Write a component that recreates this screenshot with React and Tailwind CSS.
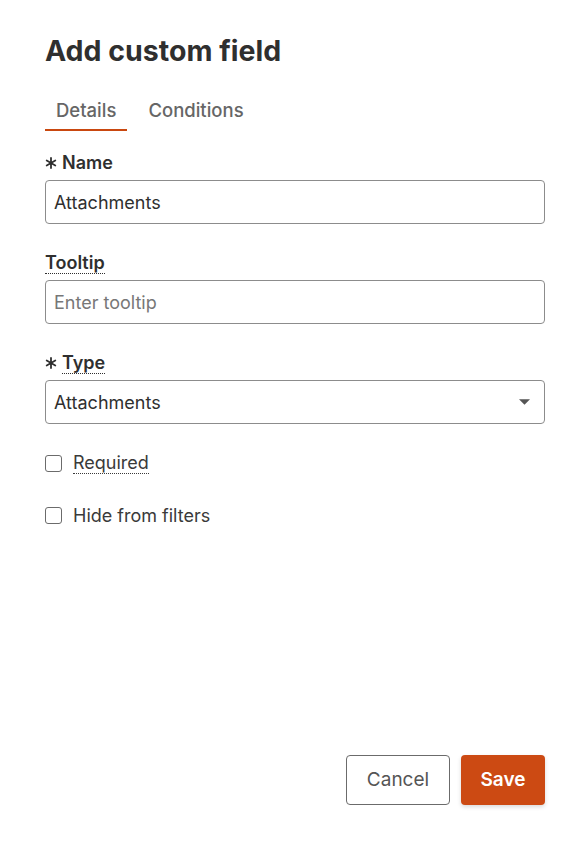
import { useState } from 'react';

const Asterisk = () => (
    <svg viewBox="0 0 12 12" className="w-3 h-3 mr-[5px]" fill="none" stroke="#2f2f2f" strokeWidth="1.8" strokeLinecap="round">
        <path d="M6 1v10M1.7 3.5l8.6 5M1.7 8.5l8.6-5" />
    </svg>
);

const Label = ({ required, dotted, children }) => (
    <div className="flex items-center h-5 mb-[7px] text-[18px] font-semibold text-[#2f2f2f]">
        {required && <Asterisk />}
        <span className={dotted ? 'border-b border-dotted border-[#2f2f2f] leading-[20px]' : 'leading-[20px]'}>{children}</span>
    </div>
);

const Checkbox = ({ label, dotted }) => (
    <label className="flex items-center gap-[11px] h-6 text-[18px] text-[#3a3a3a]">
        <span className="w-[17px] h-[17px] rounded-[3px] border-[1.5px] border-[#6b6b6b] bg-white" />
        <span className={dotted ? 'border-b border-dotted border-[#3a3a3a] leading-[21px]' : 'leading-[21px]'}>{label}</span>
    </label>
);

export default function App() {
    const [tab, setTab] = useState('details');

    return (
        <div className="min-h-[842px] bg-white flex flex-col pl-[45px] pr-[39px] pt-[33px] pb-[37px] font-['Inter',sans-serif] text-[#2f2f2f]">
            <h1 className="text-[28.5px] font-bold leading-[36px]">Add custom field</h1>

            <div className="flex mt-[29px] gap-[21px]">
                <button
                    onClick={() => setTab('details')}
                    className={`px-[11px] pb-[7px] text-[18.5px] font-medium leading-[24px] text-[#666] border-b-2 ${tab === 'details' ? 'border-[#c9480f]' : 'border-transparent'}`}
                >
                    Details
                </button>
                <button
                    onClick={() => setTab('conditions')}
                    className={`pb-[7px] text-[18.5px] font-medium leading-[24px] text-[#666] border-b-2 ${tab === 'conditions' ? 'border-[#c9480f]' : 'border-transparent'}`}
                >
                    Conditions
                </button>
            </div>

            <div className="mt-[22px]">
                <Label required>Name</Label>
                <input
                    defaultValue="Attachments"
                    className="w-full h-[44px] px-2 rounded-[4px] border border-[#8c8c8c] text-[18px] text-[#2f2f2f] outline-none"
                />
            </div>

            <div className="mt-[29px]">
                <Label dotted>Tooltip</Label>
                <input
                    placeholder="Enter tooltip"
                    className="w-full h-[44px] px-2 rounded-[4px] border border-[#8c8c8c] text-[18px] text-[#2f2f2f] placeholder:text-[#777] outline-none"
                />
            </div>

            <div className="mt-[29px]">
                <Label required dotted>Type</Label>
                <div className="w-full h-[44px] pl-2 pr-[14px] rounded-[4px] border border-[#8c8c8c] flex items-center justify-between text-[18px]">
                    <span>Attachments</span>
                    <svg viewBox="0 0 10 5" className="w-[11px] h-[6px]" fill="#555">
                        <path d="M0 0h10L5 5z" />
                    </svg>
                </div>
            </div>

            <div className="mt-[27px] flex flex-col gap-[28px]">
                <Checkbox label="Required" dotted />
                <Checkbox label="Hide from filters" />
            </div>

            <div className="mt-auto flex justify-end gap-[11px]">
                <button className="h-[50px] w-[104px] rounded-[4px] border border-[#6b6b6b] text-[19px] text-[#555] bg-white">
                    Cancel
                </button>
                <button className="h-[50px] w-[84px] rounded-[4px] bg-[#cc4a13] text-[19px] font-semibold text-white shadow-[0_2px_4px_rgba(0,0,0,0.15)]">
                    Save
                </button>
            </div>
        </div>
    );
}
